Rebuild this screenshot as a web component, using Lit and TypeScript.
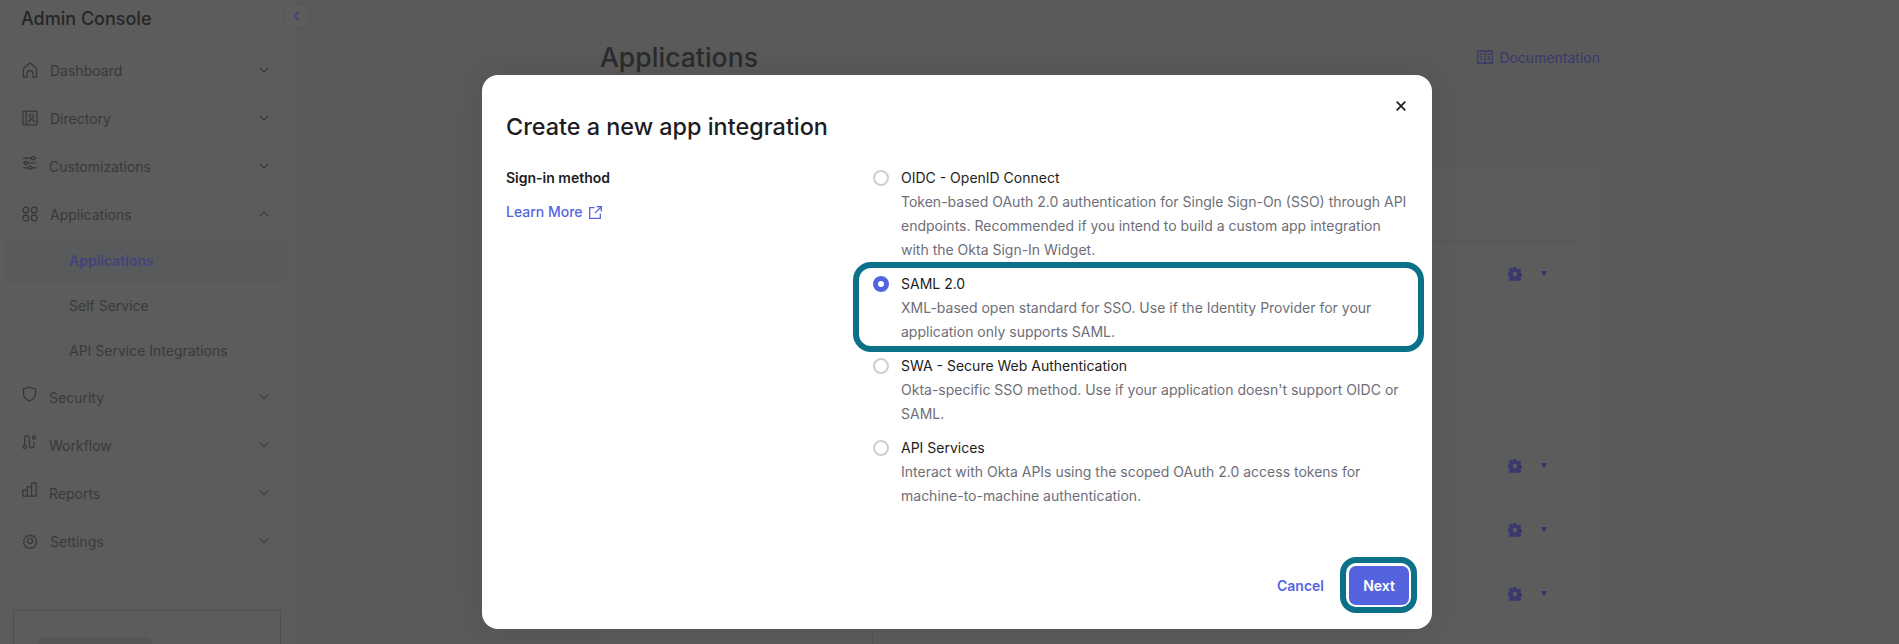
import { LitElement, css, html, svg } from "lit";
import { customElement } from "lit/decorators.js";

interface NavItem {
  label: string;
  icon: ReturnType<typeof svg>;
  width: number;
  raised?: boolean;
  open?: boolean;
  children?: { label: string; active?: boolean }[];
}

interface SignInOption {
  label: string;
  text: string;
  selected?: boolean;
}

const NAV: NavItem[] = [
  {
    label: "Dashboard",
    width: 16,
    icon: svg`<path d="M1.5 15.2V6.6L8 .9l6.5 5.7v8.6h-3.6v-3.7a2.9 2.9 0 0 0-5.8 0v3.7z"/>`,
  },
  {
    label: "Directory",
    width: 16,
    icon: svg`<rect x="1" y="1.2" width="14" height="13.6" rx="1"/><path d="M4.2 1.2v13.6"/><circle cx="9.6" cy="6" r="2"/><path d="M6.6 12.6c.2-2 1.4-2.9 3-2.9s2.8.9 3 2.9"/>`,
  },
  {
    label: "Customizations",
    width: 15,
    raised: true,
    icon: svg`<path d="M.8 3.2h8.6M12.6 3.2h1.9M.8 8h1.8M5.6 8h8.9M.8 12.8h6.2M10 12.8h4.5"/><circle cx="11" cy="3.2" r="1.6"/><circle cx="4.1" cy="8" r="1.6"/><circle cx="8.5" cy="12.8" r="1.6"/>`,
  },
  {
    label: "Applications",
    width: 16,
    open: true,
    icon: svg`<rect x="1" y="1.2" width="5.6" height="5.6" rx="2.6"/><rect x="9.4" y="1.2" width="5.6" height="5.6" rx="2.6"/><rect x="1" y="9.2" width="5.6" height="5.6" rx="2.6"/><rect x="9.4" y="9.2" width="5.6" height="5.6" rx="2.6"/>`,
    children: [
      { label: "Applications", active: true },
      { label: "Self Service" },
      { label: "API Service Integrations" },
    ],
  },
  {
    label: "Security",
    width: 15,
    raised: true,
    icon: svg`<path d="M7.5 1C5.6 2.2 3.4 2.7 1.5 2.7v5.6c0 3.2 2.7 5.4 6 6.7 3.3-1.3 6-3.5 6-6.7V2.7C11.600 2.700 9.400 2.200 7.500 1z"/>`,
  },
  {
    label: "Workflow",
    width: 15,
    raised: true,
    icon: svg`<path d="M2.700 10.400V4a2.300 2.300 0 0 1 4.600 0v7.500a2.300 2.300 0 0 0 4.600 0V8"/><circle cx="2.700" cy="12.800" r="1.600"/><circle cx="12" cy="3.400" r="1.600"/>`,
  },
  {
    label: "Reports",
    width: 15,
    raised: true,
    icon: svg`<path d="M.8 14.200V8.400h4.400M5.200 14.200V4.800h4.400M9.600 14.200V1.200h4.600v13zM.8 14.200h13.400"/>`,
  },
  {
    label: "Settings",
    width: 16,
    icon: svg`<path d="M8 .9l2 1.700 2.600-.1.7 2.500 2 1.700-1 2.300 1 2.300-2 1.700-.7 2.500-2.600-.1-2 1.700-2-1.700-2.600.1-.7-2.500-2-1.700 1-2.300-1-2.300 2-1.700.7-2.500 2.600.1z" transform="translate(.8 .8) scale(.9)"/><circle cx="8" cy="8" r="2.500"/>`,
  },
];

const OPTIONS: SignInOption[] = [
  {
    label: "OIDC - OpenID Connect",
    text: "Token-based OAuth 2.0 authentication for Single Sign-On (SSO) through API endpoints. Recommended if you intend to build a custom app integration with the Okta Sign-In Widget.",
  },
  {
    label: "SAML 2.0",
    text: "XML-based open standard for SSO. Use if the Identity Provider for your application only supports SAML.",
    selected: true,
  },
  {
    label: "SWA - Secure Web Authentication",
    text: "Okta-specific SSO method. Use if your application doesn't support OIDC or SAML.",
  },
  {
    label: "API Services",
    text: "Interact with Okta APIs using the scoped OAuth 2.0 access tokens for machine-to-machine authentication.",
  },
];

// rows of the table behind the dialog, true when the row shows its action menu
const ROWS = [true, false, false, true, true, true];

@customElement("app-root")
export class AppRoot extends LitElement {
  static styles = css`
    :host {
      display: block;
      position: relative;
      width: 1899px;
      height: 644px;
      overflow: hidden;
      background: #5a5a5a;
      font-family: Inter, "Liberation Sans", sans-serif;
      font-size: 14px;
      color: #3a3a3a;
    }
    svg {
      display: block;
      flex: none;
    }
    .page {
      display: flex;
      height: 644px;
      overflow: hidden;
    }

    /* sidebar */
    .sidebar {
      flex: none;
      width: 297px;
      height: 644px;
      background: #5c5c5c;
      overflow: hidden;
    }
    .brand {
      height: 38px;
      padding-left: 21px;
      font-size: 18px;
      font-weight: 500;
      line-height: 38px;
      color: #262626;
    }
    .nav {
      margin-top: 8px;
    }
    .nav-row {
      display: flex;
      align-items: center;
      gap: 12px;
      height: 48px;
      padding: 0 28px 0 22px;
    }
    .nav-row .icon {
      fill: none;
      stroke: #363636;
      stroke-width: 1.2;
    }
    .nav-row .raised {
      margin-top: -6px;
    }
    .nav-row span {
      flex: 1;
    }
    .chevron {
      fill: none;
      stroke: #3c3c3c;
      stroke-width: 1.2;
    }
    .sub-row {
      height: 45px;
      margin: 0 8px 0 5px;
      padding-left: 64px;
      border-radius: 8px;
      line-height: 45px;
    }
    .sub-row.active {
      background: #595a5c;
      color: #43437c;
      font-weight: 600;
    }
    .promo {
      width: 268px;
      height: 100px;
      box-sizing: border-box;
      margin: 45px 0 0 13px;
      padding: 26px 24px;
      border: 1px solid #505050;
    }
    .promo div {
      width: 114px;
      height: 40px;
      border-radius: 6px;
      background: #565656;
    }
    .collapse {
      position: absolute;
      left: 285px;
      top: 4px;
      display: flex;
      align-items: center;
      justify-content: center;
      width: 24px;
      height: 24px;
      border-radius: 50%;
      background: #5d5d5d;
      box-shadow: 0 0 4px rgba(0, 0, 0, 0.08);
    }
    .collapse svg {
      fill: none;
      stroke: #44447a;
      stroke-width: 1.5;
    }

    /* page behind the dialog */
    .main {
      flex: none;
      width: 1000px;
      margin-left: 303px;
    }
    .main-head {
      display: flex;
      align-items: center;
      justify-content: space-between;
      height: 36px;
      margin-top: 39px;
    }
    h1 {
      margin: 0;
      font-size: 26.6px;
      font-weight: 500;
      color: #2b2b2b;
    }
    .docs {
      display: flex;
      align-items: center;
      gap: 6px;
      color: #39396a;
    }
    .docs svg {
      fill: none;
      stroke: #39396a;
      stroke-width: 1.300;
    }
    .card {
      display: flex;
      height: 480px;
      margin-top: 92px;
      border-radius: 12px 12px 0 0;
      background: #5c5c5c;
    }
    .filters {
      flex: none;
      width: 272px;
      border-right: 1px solid #525252;
    }
    .table {
      flex: 1;
      padding: 74px 23px 0 0;
    }
    .table-head {
      border-top: 1px solid #545454;
    }
    .row {
      display: flex;
      align-items: center;
      justify-content: flex-end;
      gap: 19px;
      box-sizing: border-box;
      height: 64px;
      padding-right: 30px;
      border-bottom: 1px solid #585858;
    }
    .row svg {
      fill: #38386a;
    }

    /* dialog */
    .scrim {
      position: absolute;
      inset: 0;
      padding: 75px 0 0 482px;
    }
    .modal {
      position: relative;
      width: 950px;
      box-sizing: border-box;
      padding: 36px 23px 24px 24px;
      border-radius: 16px;
      background: #fff;
      box-shadow: 0 0 30px rgba(0, 0, 0, 0.1);
      color: #1d1d21;
    }
    h2 {
      margin: 0;
      font-size: 23.4px;
      font-weight: 500;
      line-height: 32px;
      color: #1d1d21;
    }
    .close {
      position: absolute;
      top: 26px;
      right: 26px;
      fill: none;
      stroke: #1d1d21;
      stroke-width: 1.700;
    }
    .body {
      display: flex;
      margin-top: 23px;
    }
    .side {
      flex: none;
      width: 367px;
    }
    .side-label {
      font-weight: 600;
      line-height: 24px;
    }
    .learn {
      display: flex;
      align-items: center;
      gap: 6px;
      margin-top: 10px;
      font-weight: 500;
      line-height: 24px;
      color: #5665e4;
    }
    .learn svg {
      fill: none;
      stroke: #5665e4;
      stroke-width: 1.300;
    }
    .options {
      display: flex;
      flex-direction: column;
      gap: 10px;
      width: 536px;
    }
    .option {
      position: relative;
      display: flex;
      gap: 12px;
      line-height: 24px;
    }
    .radio {
      flex: none;
      width: 16px;
      height: 16px;
      box-sizing: border-box;
      margin-top: 4px;
      border: 2px solid #cfcfcf;
      border-radius: 50%;
      background: #fff;
    }
    .option.selected .radio {
      border: 5px solid #5663de;
    }
    .option p {
      margin: 0;
      color: #6e6e78;
    }
    .highlight {
      position: absolute;
      inset: -10px -15px -8px -20px;
      border: 6px solid #0b7188;
      border-radius: 18px;
      pointer-events: none;
    }
    .actions {
      display: flex;
      align-items: center;
      justify-content: flex-end;
      gap: 25px;
      margin-top: 58px;
      font-weight: 600;
    }
    .cancel {
      color: #5665e4;
    }
    .next {
      position: relative;
      width: 60px;
      height: 39px;
      border-radius: 7px;
      background: #5663de;
      color: #fff;
      line-height: 39px;
      text-align: center;
    }
    .next::after {
      content: "";
      position: absolute;
      inset: -9px -8px -8px -9px;
      border: 6px solid #0b7188;
      border-radius: 16px;
    }
  `;

  render() {
    return html`
      <div class="page">
        <aside class="sidebar">
          <div class="brand">Admin Console</div>
          <nav class="nav">${NAV.map((item) => this.renderNavItem(item))}</nav>
          <div class="promo"><div></div></div>
        </aside>
        <main class="main">
          <div class="main-head">
            <h1>Applications</h1>
            <div class="docs">
              <svg width="16" height="15" viewBox="0 0 16 15">
                <path d="M.7 1h6.200l1.100.8L9.100 1h6.200v12H9l-1 1-1-1H.7zM8 1.800V13M2.700 4.200h3M2.700 6.800h3M2.700 9.400h3M10.300 4.200h3M10.300 6.800h3M10.300 9.400h3" />
              </svg>
              Documentation
            </div>
          </div>
          <section class="card">
            <div class="filters"></div>
            <div class="table">
              <div class="table-head"></div>
              ${ROWS.map((hasMenu) => this.renderRow(hasMenu))}
            </div>
          </section>
        </main>
      </div>
      <div class="collapse">
        <svg width="8" height="12" viewBox="0 0 8 12"><path d="M6 1.500L2 6l4 4.500" /></svg>
      </div>
      <div class="scrim">
        <div class="modal">
          <h2>Create a new app integration</h2>
          <svg class="close" width="10" height="10" viewBox="0 0 10 10"><path d="M.7.700l8.600 8.600M9.300.700L.7 9.300" /></svg>
          <div class="body">
            <div class="side">
              <div class="side-label">Sign-in method</div>
              <div class="learn">
                Learn More
                <svg width="13" height="13" viewBox="0 0 13 13">
                  <path d="M5.500 1.700H.7v10.600h10.600V7.500M7.500.7h4.800v4.800M12.300.7L6 7" />
                </svg>
              </div>
            </div>
            <div class="options">${OPTIONS.map((option) => this.renderOption(option))}</div>
          </div>
          <div class="actions">
            <span class="cancel">Cancel</span>
            <span class="next">Next</span>
          </div>
        </div>
      </div>
    `;
  }

  renderNavItem(item: NavItem) {
    return html`
      <div class="nav-row">
        <svg
          class="icon ${item.raised ? "raised" : ""}"
          width=${item.width}
          height="16"
          viewBox="0 0 ${item.width} 16"
        >${item.icon}</svg>
        <span>${item.label}</span>
        <svg class="chevron" width="10" height="6" viewBox="0 0 10 6">
          <path d=${item.open ? "M.7 5.300L5 1l4.300 4.300" : "M.7.700L5 5l4.300-4.300"} />
        </svg>
      </div>
      ${item.children?.map(
        (child) => html`<div class="sub-row ${child.active ? "active" : ""}">${child.label}</div>`
      )}
    `;
  }

  renderRow(hasMenu: boolean) {
    return html`
      <div class="row">
        ${hasMenu
          ? html`
              <svg width="14" height="14" viewBox="0 0 14 14">
                <path
                  fill-rule="evenodd"
                  d="M5.800 0h2.400l.4 2 1.300.6 1.800-1.100 1.700 1.700-1.100 1.800.6 1.300 2 .4v2.400l-2 .4-.6 1.300 1.100 1.800-1.700 1.700-1.800-1.100-1.300.6-.4 2H5.800l-.4-2-1.300-.6-1.800 1.100-1.700-1.700 1.100-1.800-.6-1.300-2-.4V5.800l2-.4.6-1.300-1.100-1.800 1.700-1.700 1.800 1.100 1.300-.6zM7 4.700a2.300 2.300 0 1 0 0 4.600 2.300 2.300 0 0 0 0-4.600z"
                />
              </svg>
              <svg width="6" height="6" viewBox="0 0 6 6"><path d="M0 0h6L3 6z" /></svg>
            `
          : ""}
      </div>
    `;
  }

  renderOption(option: SignInOption) {
    return html`
      <div class="option ${option.selected ? "selected" : ""}">
        <div class="radio"></div>
        <div>
          ${option.label}
          <p>${option.text}</p>
        </div>
        ${option.selected ? html`<div class="highlight"></div>` : ""}
      </div>
    `;
  }
}
